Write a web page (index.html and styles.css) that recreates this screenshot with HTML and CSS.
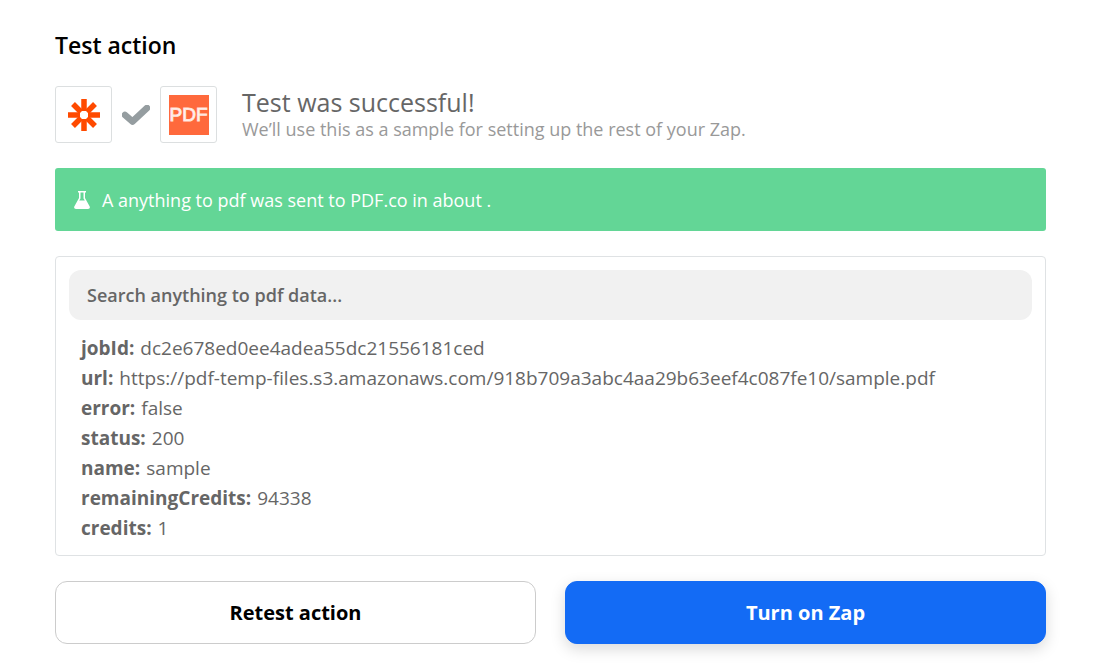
FILE: index.html
```html
<!DOCTYPE html>
<html lang="en">
    <head>
        <meta charset="utf-8">
        <title>Test action</title>
        <link rel="stylesheet" href="styles.css">
    </head>
<body>
    <main class="test-step">
        <h1 class="title">Test action</h1>

        <div class="summary">
            <div class="apps">
                <div class="app-box">
                    <svg class="zap-icon" viewBox="0 0 32 32" role="img" aria-label="Zapier">
                        <g stroke="#ff4a00" stroke-width="5.500">
                            <path d="M16 0V12M16 20V32M0 16H12M20 16H32"/>
                            <path d="M5 5L13 13M19 19L27 27M27 5L19 13M13 19L5 27"/>
                        </g>
                    </svg>
                </div>
                <svg class="check-icon" viewBox="0 0 28 20" aria-hidden="true">
                    <path d="M3 10L10.500 16.500L25 3" fill="none" stroke="#959da0" stroke-width="6.500" stroke-linecap="round" stroke-linejoin="round"/>
                </svg>
                <div class="app-box">
                    <div class="pdf-logo">PDF</div>
                </div>
            </div>
            <div class="summary-text">
                <h2 class="summary-title">Test was successful!</h2>
                <p class="summary-note">We’ll use this as a sample for setting up the rest of your Zap.</p>
            </div>
        </div>

        <div class="alert">
            <svg class="flask-icon" viewBox="0 0 16 18" aria-hidden="true">
                <path fill="#fff" fill-rule="evenodd" d="M4 0H12V1.500H11V7L15.700 15.500Q16.500 18 14 18H2Q-0.500 18 0.300 15.500L5 7V1.500H4ZM6.500 1.500V7.500L5.200 9.500H10.800L9.500 7.500V1.500Z"/>
            </svg>
            <span>A anything to pdf was sent to PDF.co in about .</span>
        </div>

        <div class="result">
            <input class="search" type="text" placeholder="Search anything to pdf data..." aria-label="Search anything to pdf data">
            <dl class="fields">
                <div class="field"><dt>jobId:</dt><dd>dc2e678ed0ee4adea55dc21556181ced</dd></div>
                <div class="field"><dt>url:</dt><dd>https://pdf-temp-files.s3.amazonaws.com/918b709a3abc4aa29b63eef4c087fe10/sample.pdf</dd></div>
                <div class="field"><dt>error:</dt><dd>false</dd></div>
                <div class="field"><dt>status:</dt><dd>200</dd></div>
                <div class="field"><dt>name:</dt><dd>sample</dd></div>
                <div class="field"><dt>remainingCredits:</dt><dd>94338</dd></div>
                <div class="field"><dt>credits:</dt><dd>1</dd></div>
            </dl>
        </div>

        <div class="actions">
            <button class="button" type="button">Retest action</button>
            <button class="button button-primary" type="button">Turn on Zap</button>
        </div>
    </main>
</body>
</html>
```

FILE: styles.css
```css
* {
    box-sizing: border-box;
}

body {
    font-family: "Open Sans", sans-serif;
    font-size: 18px;
    color: #666;
    background-color: #fff;
    margin: 0;
}

.test-step {
    padding: 30px 54px 23px 55px;
}

.title {
    margin: 0 0 26px;
    font-size: 23px;
    line-height: 30px;
    font-weight: 600;
    color: #000;
}

.summary {
    display: flex;
    align-items: center;
    gap: 25px;
    margin-bottom: 25px;
}

.apps {
    display: flex;
    align-items: center;
    gap: 10px;
}

.app-box {
    display: flex;
    align-items: center;
    justify-content: center;
    width: 57px;
    height: 57px;
    border: 1px solid #dcdfe0;
    border-radius: 3px;
}

.zap-icon {
    width: 32px;
    height: 32px;
}

.check-icon {
    width: 28px;
    height: 20px;
}

.pdf-logo {
    width: 40px;
    height: 40px;
    background-color: #ff693c;
    color: #fff;
    font-family: "Liberation Sans", Arial, sans-serif;
    font-size: 19px;
    line-height: 40px;
    text-align: center;
    -webkit-text-stroke: 1px #ffe3da;
}

.summary-title {
    margin: 0;
    font-size: 25px;
    line-height: 30px;
    font-weight: 400;
}

.summary-note {
    margin: 0;
    line-height: 25px;
    color: #999;
}

.alert {
    display: flex;
    align-items: center;
    gap: 12px;
    min-height: 63px;
    margin-bottom: 25px;
    padding: 0 19px;
    background-color: #63d696;
    border-radius: 3px;
    color: #fff;
}

.flask-icon {
    width: 16px;
    height: 18px;
}

.result {
    margin-bottom: 25px;
    padding: 13px 13px 12px;
    border: 1px solid #dfe2e4;
    border-radius: 4px;
}

.search {
    display: block;
    width: 100%;
    height: 50px;
    padding: 0 18px;
    border: none;
    border-radius: 12px;
    background-color: #f1f1f1;
    font: 600 18px "Open Sans", sans-serif;
    color: #666;
}

.search::placeholder {
    color: #666;
    opacity: 1;
}

.fields {
    margin: 13px 12px 0;
    font-size: 19px;
    line-height: 30px;
}

.field {
    display: flex;
    gap: 6px;
}

.field dt {
    font-weight: 700;
}

.field dd {
    margin: 0;
    min-width: 0;
    overflow-wrap: anywhere;
}

.actions {
    display: grid;
    grid-template-columns: 1fr 1fr;
    gap: 29px;
}

.button {
    height: 63px;
    border: 1px solid #ccc;
    border-radius: 12px;
    background-color: #fff;
    color: #000;
    font: 700 20px "Open Sans", sans-serif;
    cursor: pointer;
}

.button-primary {
    border-color: #136bf5;
    background-color: #136bf5;
    color: #fff;
    box-shadow: 0 5px 15px rgba(0, 0, 0, 0.15);
}
```
